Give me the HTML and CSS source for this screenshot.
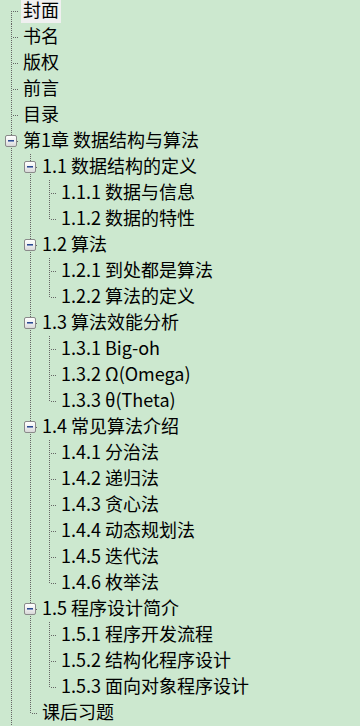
FILE: index.html
```html
<!DOCTYPE html>
<html lang="zh-CN">
<head>
<meta charset="utf-8">
<title>目录树</title>
<link rel="stylesheet" href="styles.css">
</head>
<body>
<div class="tree">
  <div class="row"><span class="g first"></span><span class="label sel">封面</span></div>
  <div class="row"><span class="g tee"></span><span class="label">书名</span></div>
  <div class="row"><span class="g tee"></span><span class="label">版权</span></div>
  <div class="row"><span class="g tee"></span><span class="label">前言</span></div>
  <div class="row"><span class="g tee"></span><span class="label">目录</span></div>
  <div class="row"><span class="g tee"><span class="exp"></span></span><span class="label">第1章 数据结构与算法</span></div>
  <div class="row"><span class="g pipe"></span><span class="g tee"><span class="exp"></span></span><span class="label">1.1 数据结构的定义</span></div>
  <div class="row"><span class="g pipe"></span><span class="g pipe"></span><span class="g tee"></span><span class="label">1.1.1 数据与信息</span></div>
  <div class="row"><span class="g pipe"></span><span class="g pipe"></span><span class="g elbow"></span><span class="label">1.1.2 数据的特性</span></div>
  <div class="row"><span class="g pipe"></span><span class="g tee"><span class="exp"></span></span><span class="label">1.2 算法</span></div>
  <div class="row"><span class="g pipe"></span><span class="g pipe"></span><span class="g tee"></span><span class="label">1.2.1 到处都是算法</span></div>
  <div class="row"><span class="g pipe"></span><span class="g pipe"></span><span class="g elbow"></span><span class="label">1.2.2 算法的定义</span></div>
  <div class="row"><span class="g pipe"></span><span class="g tee"><span class="exp"></span></span><span class="label">1.3 算法效能分析</span></div>
  <div class="row"><span class="g pipe"></span><span class="g pipe"></span><span class="g tee"></span><span class="label">1.3.1 Big-oh</span></div>
  <div class="row"><span class="g pipe"></span><span class="g pipe"></span><span class="g tee"></span><span class="label">1.3.2 Ω(Omega)</span></div>
  <div class="row"><span class="g pipe"></span><span class="g pipe"></span><span class="g elbow"></span><span class="label">1.3.3 θ(Theta)</span></div>
  <div class="row"><span class="g pipe"></span><span class="g tee"><span class="exp"></span></span><span class="label">1.4 常见算法介绍</span></div>
  <div class="row"><span class="g pipe"></span><span class="g pipe"></span><span class="g tee"></span><span class="label">1.4.1 分治法</span></div>
  <div class="row"><span class="g pipe"></span><span class="g pipe"></span><span class="g tee"></span><span class="label">1.4.2 递归法</span></div>
  <div class="row"><span class="g pipe"></span><span class="g pipe"></span><span class="g tee"></span><span class="label">1.4.3 贪心法</span></div>
  <div class="row"><span class="g pipe"></span><span class="g pipe"></span><span class="g tee"></span><span class="label">1.4.4 动态规划法</span></div>
  <div class="row"><span class="g pipe"></span><span class="g pipe"></span><span class="g tee"></span><span class="label">1.4.5 迭代法</span></div>
  <div class="row"><span class="g pipe"></span><span class="g pipe"></span><span class="g elbow"></span><span class="label">1.4.6 枚举法</span></div>
  <div class="row"><span class="g pipe"></span><span class="g tee"><span class="exp"></span></span><span class="label">1.5 程序设计简介</span></div>
  <div class="row"><span class="g pipe"></span><span class="g pipe"></span><span class="g tee"></span><span class="label">1.5.1 程序开发流程</span></div>
  <div class="row"><span class="g pipe"></span><span class="g pipe"></span><span class="g tee"></span><span class="label">1.5.2 结构化程序设计</span></div>
  <div class="row"><span class="g pipe"></span><span class="g pipe"></span><span class="g elbow"></span><span class="label">1.5.3 面向对象程序设计</span></div>
  <div class="row"><span class="g pipe"></span><span class="g elbow"></span><span class="label">课后习题</span></div>
  <div class="row"><span class="g pipe"></span></div>
</div>
</body>
</html>
```

FILE: styles.css
```css
html, body {
  margin: 0;
  padding: 0;
  background: #cce8cf;
  height: 100%;
  overflow: hidden;
}

.tree {
  margin-top: -2px;
  font-family: "Noto Sans CJK SC", "Microsoft YaHei", sans-serif;
  font-size: 18px;
  color: #000;
}

.row {
  display: flex;
  align-items: flex-start;
  height: 26px;
}

.g {
  position: relative;
  flex: 0 0 19px;
  width: 19px;
  height: 26px;
  background-repeat: no-repeat;
}

.pipe {
  background-image: repeating-linear-gradient(to bottom, #666 0 1px, transparent 1px 2px);
  background-size: 1px 26px;
  background-position: 11px 0;
}

.tee {
  background-image:
    repeating-linear-gradient(to bottom, #666 0 1px, transparent 1px 2px),
    repeating-linear-gradient(to right, #666 0 1px, transparent 1px 2px);
  background-size: 1px 26px, 8px 1px;
  background-position: 11px 0, 13px 13px;
}

.elbow {
  background-image:
    repeating-linear-gradient(to bottom, #666 0 1px, transparent 1px 2px),
    repeating-linear-gradient(to right, #666 0 1px, transparent 1px 2px);
  background-size: 1px 14px, 8px 1px;
  background-position: 11px 0, 13px 13px;
}

.first {
  background-image:
    repeating-linear-gradient(to bottom, #666 0 1px, transparent 1px 2px),
    repeating-linear-gradient(to right, #666 0 1px, transparent 1px 2px);
  background-size: 1px 13px, 8px 1px;
  background-position: 11px 13px, 13px 13px;
}

.exp {
  position: absolute;
  left: 5px;
  top: 7px;
  width: 12px;
  height: 12px;
  box-sizing: border-box;
  border: 1px solid #8a8a8a;
  border-radius: 2px;
  background: linear-gradient(to bottom, #ffffff 0%, #f0f0f0 50%, #d8d8d8 100%);
}

.exp::after {
  content: "";
  position: absolute;
  left: 2px;
  top: 4px;
  width: 6px;
  height: 2px;
  background: linear-gradient(to bottom, #2a4a90 0 1px, #7f93c0 1px 2px);
}

.label {
  margin-left: 2px;
  margin-top: 2px;
  padding: 0 2px;
  height: 23px;
  line-height: 19px;
  white-space: nowrap;
}

.sel {
  background: #f0f0f0;
}
```
